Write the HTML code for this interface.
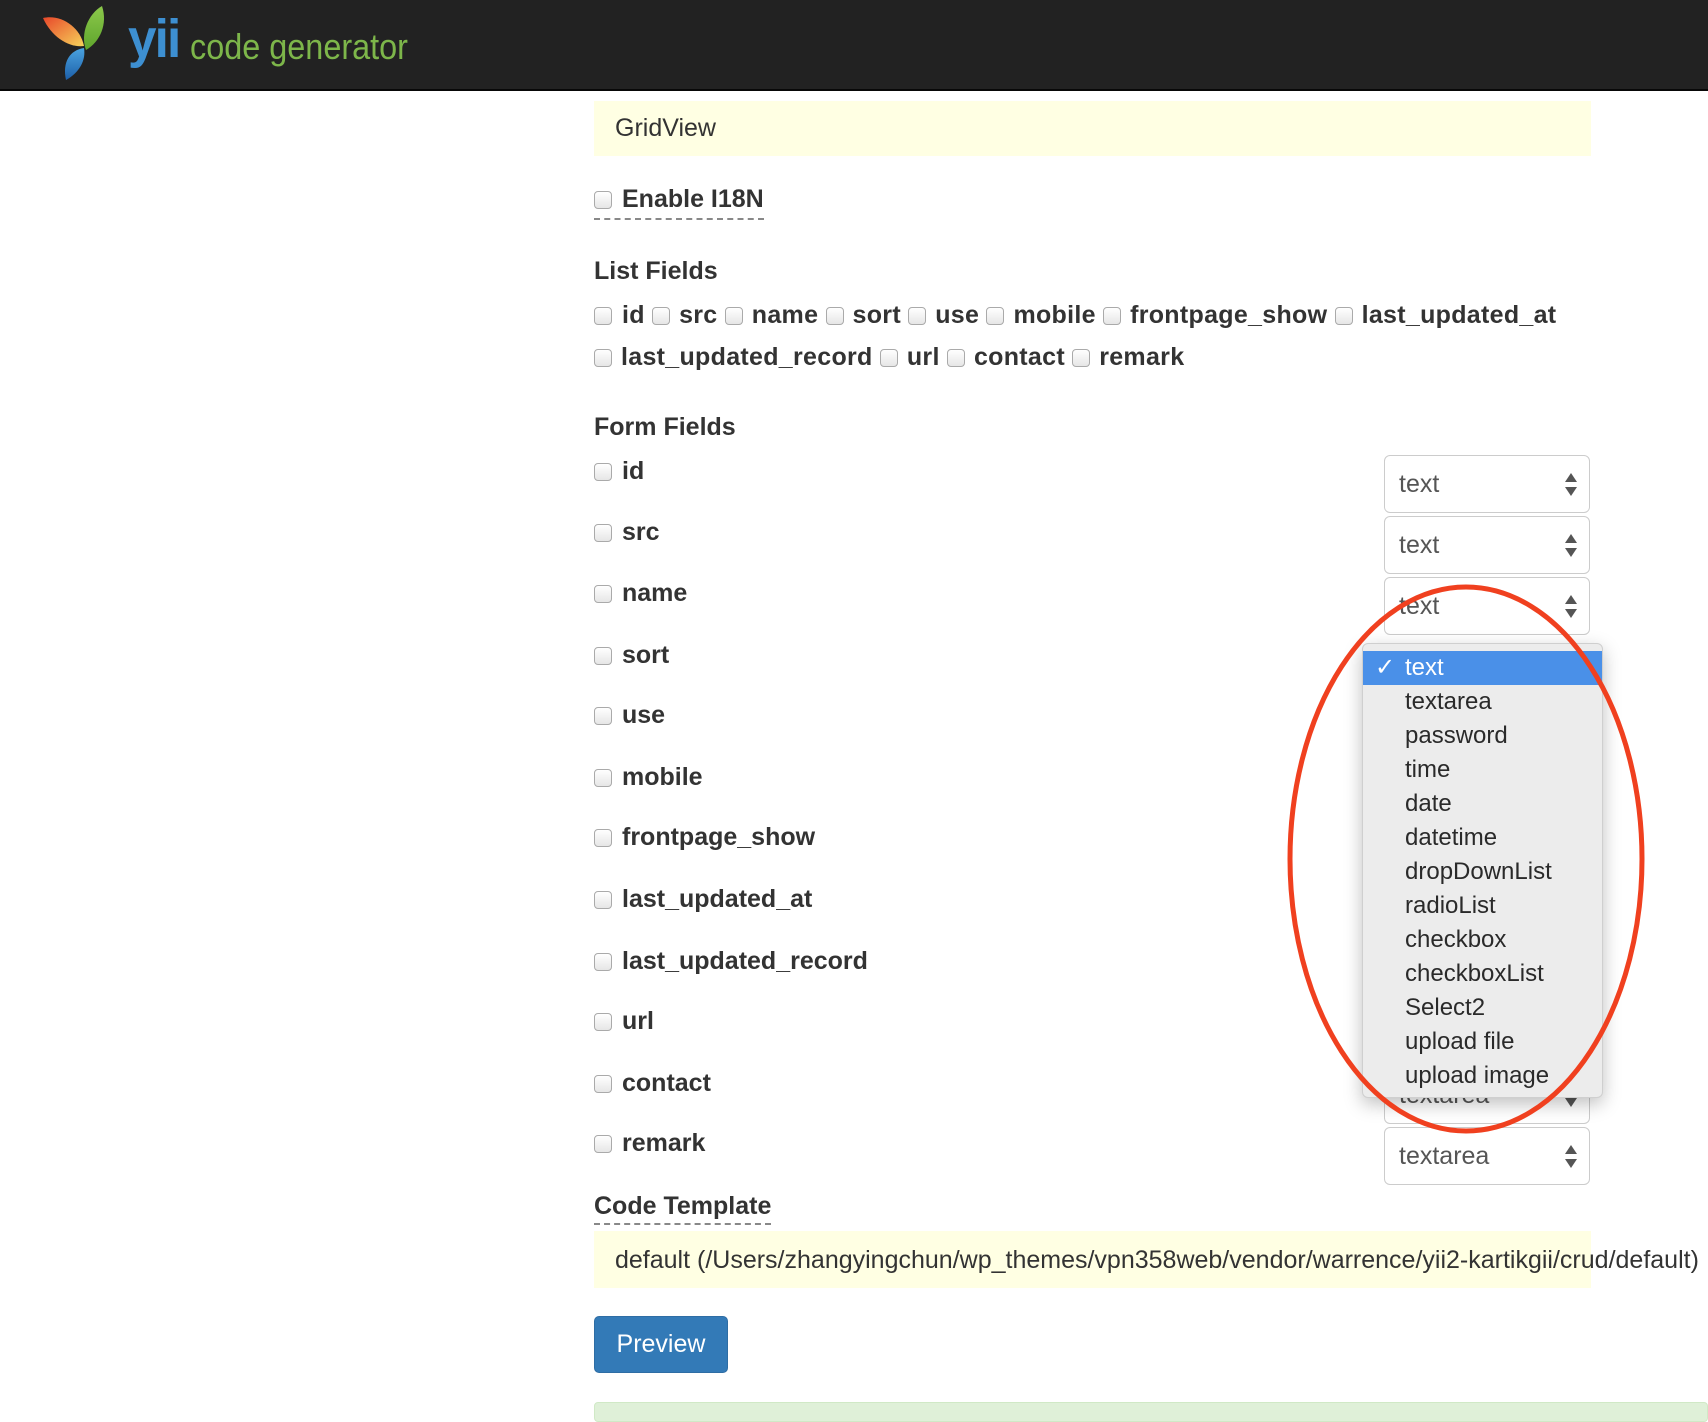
<!DOCTYPE html>
<html><head><meta charset="utf-8"><style>
*{box-sizing:border-box}
body{margin:0;width:1708px;height:1410px;overflow:hidden;background:#fff;font-family:"Liberation Sans",Helvetica,Arial,sans-serif;color:#333;position:relative}
.hdr{position:absolute;left:0;top:0;width:1708px;height:91px;background:#222;border-bottom:2px solid #080808}
.a{position:absolute;white-space:nowrap}
.cb{display:inline-block;width:18px;height:18px;border:1px solid #aaa;border-radius:4px;background:linear-gradient(#fff,#e6e6e6);vertical-align:-2px;margin-right:10px}
.b{font-weight:bold;font-size:25px;color:#333}
.lf{letter-spacing:0.3px}
.lf span{margin-right:9px}
.sel{position:absolute;left:1384px;width:206px;height:58px;border:1px solid #ccc;border-radius:6px;background:#fff;font-size:25px;color:#555;padding:14px 0 0 14px}
.sel:after{content:"";position:absolute;right:12px;top:17px;width:0;height:0;border-left:6px solid transparent;border-right:6px solid transparent;border-bottom:9px solid #555}
.sel:before{content:"";position:absolute;right:12px;top:31px;width:0;height:0;border-left:6px solid transparent;border-right:6px solid transparent;border-top:9px solid #555}
.dd{position:absolute;left:1362px;top:643px;width:241px;height:455px;background:#ececec;border:1px solid #cfcfcf;border-radius:6px;box-shadow:0 6px 18px rgba(0,0,0,.25);padding-top:7px}
.dd div{height:34px;line-height:34px;font-size:24px;color:#2a2a2a;padding-left:42px;position:relative}
.dd .hl{background:#4a90e8;color:#fff}
</style></head><body>
<div class="hdr">
<svg style="position:absolute;left:40px;top:6px" width="78" height="76" viewBox="0 0 78 76">
<defs><linearGradient id="o" x1="0" y1="0" x2="1" y2="1"><stop offset="0" stop-color="#e8472a"/><stop offset="1" stop-color="#f6d35a"/></linearGradient>
<linearGradient id="g" x1="0" y1="0" x2="0" y2="1"><stop offset="0" stop-color="#8cc84b"/><stop offset="1" stop-color="#5ea52c"/></linearGradient>
<linearGradient id="bl" x1="0" y1="0" x2="0" y2="1"><stop offset="0" stop-color="#4aa3e0"/><stop offset="1" stop-color="#1d5fa8"/></linearGradient></defs>
<path d="M3 12 C20 8 40 20 44 40 C30 42 12 32 3 12Z" fill="url(#o)"/>
<path d="M62 0 C68 18 60 36 46 44 C40 28 48 8 62 0Z" fill="url(#g)"/>
<path d="M44 42 C30 44 22 56 26 74 C40 66 46 54 44 42Z" fill="url(#bl)"/>
</svg>
<div class="a" style="left:128px;top:8px;font-size:54px;font-weight:bold;color:#3d8fd1;letter-spacing:-2px;transform:scaleX(.95);transform-origin:left">yii</div>
<div class="a" style="left:190px;top:26px;font-size:36px;color:#7db64a;transform:scaleX(.9);transform-origin:left">code generator</div>
</div>

<div class="a" style="left:594px;top:101px;width:997px;height:55px;background:#ffffe3;font-size:25px;padding:13px 0 0 21px">GridView</div>

<div class="a b" style="left:594px;top:185px;border-bottom:2px dashed #888;padding-bottom:4px"><span class="cb"></span>Enable I18N</div>
<div class="a b" style="left:594px;top:257px">List Fields</div>
<div class="a b lf" style="left:594px;top:301px"><span class="cb" style="margin-right:10px"></span>id <span class="cb"></span>src <span class="cb"></span>name <span class="cb"></span>sort <span class="cb"></span>use <span class="cb"></span>mobile <span class="cb"></span>frontpage_show <span class="cb"></span>last_updated_at</div>
<div class="a b lf" style="left:594px;top:343px"><span class="cb"></span>last_updated_record <span class="cb"></span>url <span class="cb"></span>contact <span class="cb"></span>remark</div>
<div class="a b" style="left:594px;top:413px">Form Fields</div>

<div class="a b" style="left:594px;top:457px"><span class="cb"></span>id</div>
<div class="a b" style="left:594px;top:518px"><span class="cb"></span>src</div>
<div class="a b" style="left:594px;top:579px"><span class="cb"></span>name</div>
<div class="a b" style="left:594px;top:641px"><span class="cb"></span>sort</div>
<div class="a b" style="left:594px;top:701px"><span class="cb"></span>use</div>
<div class="a b" style="left:594px;top:763px"><span class="cb"></span>mobile</div>
<div class="a b" style="left:594px;top:823px"><span class="cb"></span>frontpage_show</div>
<div class="a b" style="left:594px;top:885px"><span class="cb"></span>last_updated_at</div>
<div class="a b" style="left:594px;top:947px"><span class="cb"></span>last_updated_record</div>
<div class="a b" style="left:594px;top:1007px"><span class="cb"></span>url</div>
<div class="a b" style="left:594px;top:1069px"><span class="cb"></span>contact</div>
<div class="a b" style="left:594px;top:1129px"><span class="cb"></span>remark</div>

<div class="sel" style="top:455px">text</div>
<div class="sel" style="top:516px">text</div>
<div class="sel" style="top:577px">text</div>
<div class="sel" style="top:1066px">textarea</div>
<div class="sel" style="top:1127px">textarea</div>

<div class="dd">
<div class="hl"><span style="position:absolute;left:12px">✓</span>text</div>
<div>textarea</div><div>password</div><div>time</div><div>date</div><div>datetime</div><div>dropDownList</div><div>radioList</div><div>checkbox</div><div>checkboxList</div><div>Select2</div><div>upload file</div><div>upload image</div>
</div>

<svg class="a" style="left:0;top:0" width="1708" height="1410"><ellipse cx="1466" cy="859" rx="176" ry="272" fill="none" stroke="#f0401f" stroke-width="5"/></svg>

<div class="a b" style="left:594px;top:1192px;border-bottom:2px dashed #888;padding-bottom:2px">Code Template</div>
<div class="a" style="left:594px;top:1231px;width:997px;height:57px;background:#ffffe3"></div>
<div class="a" style="left:615px;top:1246px;font-size:25px;color:#333">default (/Users/zhangyingchun/wp_themes/vpn358web/vendor/warrence/yii2-kartikgii/crud/default)</div>
<div class="a" style="left:594px;top:1316px;width:134px;height:57px;background:#337ab7;border:1px solid #2e6da4;border-radius:5px;color:#fff;font-size:25px;text-align:center;line-height:55px">Preview</div>
<div class="a" style="left:594px;top:1402px;width:1114px;height:20px;background:#dff0d8;border:1px solid #d0e9c6;border-radius:4px"></div>
</body></html>
